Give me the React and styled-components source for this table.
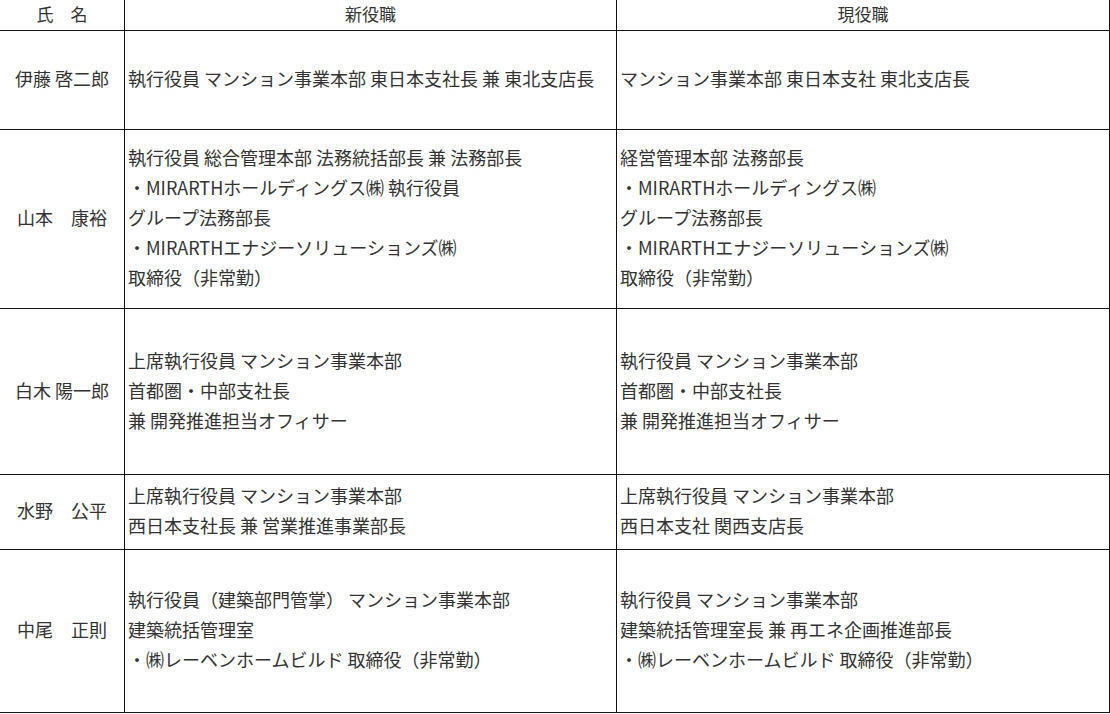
import React from "react";
import styled, { createGlobalStyle } from "styled-components";

const GlobalStyle = createGlobalStyle`
  html, body {
    margin: 0;
    padding: 0;
    background: #fff;
  }
  body {
    font-family: "Noto Sans CJK JP", "Noto Sans", sans-serif;
    color: #333;
  }
`;

const Grid = styled.div`
  display: grid;
  grid-template-columns: 125px 492px 493px;
  grid-template-rows: 31px 99px 179px 166px 75px 163px;
  width: 1110px;
`;

const Cell = styled.div`
  box-sizing: border-box;
  border-right: 1px solid #111;
  border-bottom: 1px solid #111;
  display: flex;
  flex-direction: column;
  justify-content: center;
  align-items: ${(p) => (p.$center ? "center" : "flex-start")};
  padding: 0 0 4px ${(p) => (p.$center ? "0" : "3px")};
  font-size: 18px;
  line-height: 30px;
  white-space: pre;
`;

const HeadCell = styled(Cell)`
  font-size: 17px;
  padding-bottom: 2px;
`;

const Line = styled.span`
  display: block;
`;

const rows = [
  {
    name: "伊藤 啓二郎",
    next: ["執行役員 マンション事業本部 東日本支社長 兼 東北支店長"],
    current: ["マンション事業本部 東日本支社 東北支店長"],
  },
  {
    name: "山本　康裕",
    next: [
      "執行役員 総合管理本部 法務統括部長 兼 法務部長",
      "・MIRARTHホールディングス㈱ 執行役員",
      "グループ法務部長",
      "・MIRARTHエナジーソリューションズ㈱",
      "取締役（非常勤）",
    ],
    current: [
      "経営管理本部 法務部長",
      "・MIRARTHホールディングス㈱",
      "グループ法務部長",
      "・MIRARTHエナジーソリューションズ㈱",
      "取締役（非常勤）",
    ],
  },
  {
    name: "白木 陽一郎",
    next: [
      "上席執行役員 マンション事業本部",
      "首都圏・中部支社長",
      "兼 開発推進担当オフィサー",
    ],
    current: [
      "執行役員 マンション事業本部",
      "首都圏・中部支社長",
      "兼 開発推進担当オフィサー",
    ],
  },
  {
    name: "水野　公平",
    next: ["上席執行役員 マンション事業本部", "西日本支社長 兼 営業推進事業部長"],
    current: ["上席執行役員 マンション事業本部", "西日本支社 関西支店長"],
  },
  {
    name: "中尾　正則",
    next: [
      "執行役員（建築部門管掌） マンション事業本部",
      "建築統括管理室",
      "・㈱レーベンホームビルド 取締役（非常勤）",
    ],
    current: [
      "執行役員 マンション事業本部",
      "建築統括管理室長 兼 再エネ企画推進部長",
      "・㈱レーベンホームビルド 取締役（非常勤）",
    ],
  },
];

const Lines = ({ items }) => items.map((t, i) => <Line key={i}>{t}</Line>);

export default function App() {
  return (
    <>
      <GlobalStyle />
      <Grid>
        <HeadCell $center>氏　名</HeadCell>
        <HeadCell $center>新役職</HeadCell>
        <HeadCell $center>現役職</HeadCell>
        {rows.map((r) => (
          <React.Fragment key={r.name}>
            <Cell $center>{r.name}</Cell>
            <Cell>
              <Lines items={r.next} />
            </Cell>
            <Cell>
              <Lines items={r.current} />
            </Cell>
          </React.Fragment>
        ))}
      </Grid>
    </>
  );
}
